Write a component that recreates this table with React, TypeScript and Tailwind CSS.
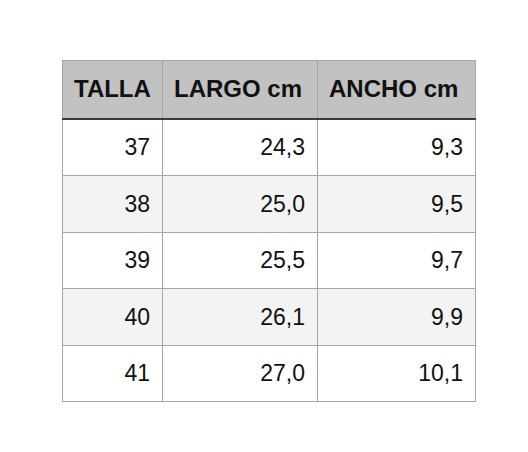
const rows = [
  { h: "h-[57px]", cells: ["37", "24,3", "9,3"] },
  { h: "h-[57px]", cells: ["38", "25,0", "9,5"] },
  { h: "h-[56px]", cells: ["39", "25,5", "9,7"] },
  { h: "h-[57px]", cells: ["40", "26,1", "9,9"] },
  { h: "h-[56px]", cells: ["41", "27,0", "10,1"] },
];

export default function App() {
  return (
    <div className="w-[528px] h-[452px] bg-white pt-[60px] pl-[62px] font-['Liberation_Sans',Arial,sans-serif] text-[#111]">
      <table className="border-collapse text-[23px]">
        <thead>
          <tr className="bg-[#c2c2c2] text-[24px]">
            <th className="w-[100px] h-[58px] px-[11px] text-left font-bold border border-[#a6a6a6] border-b-2 border-b-[#3a3a3a]">
              TALLA
            </th>
            <th className="w-[155px] h-[58px] px-[11px] text-left font-bold border border-[#a6a6a6] border-b-2 border-b-[#3a3a3a]">
              LARGO cm
            </th>
            <th className="w-[158px] h-[58px] px-[11px] text-left font-bold border border-[#a6a6a6] border-b-2 border-b-[#3a3a3a]">
              ANCHO cm
            </th>
          </tr>
        </thead>
        <tbody>
          {rows.map((r, i) => (
            <tr key={r.cells[0]} className={i % 2 === 1 ? "bg-[#f3f3f3]" : "bg-white"}>
              {r.cells.map((c, j) => (
                <td
                  key={j}
                  className={`${r.h} px-[12px] text-right border border-[#a6a6a6]`}
                >
                  {c}
                </td>
              ))}
            </tr>
          ))}
        </tbody>
      </table>
    </div>
  );
}
